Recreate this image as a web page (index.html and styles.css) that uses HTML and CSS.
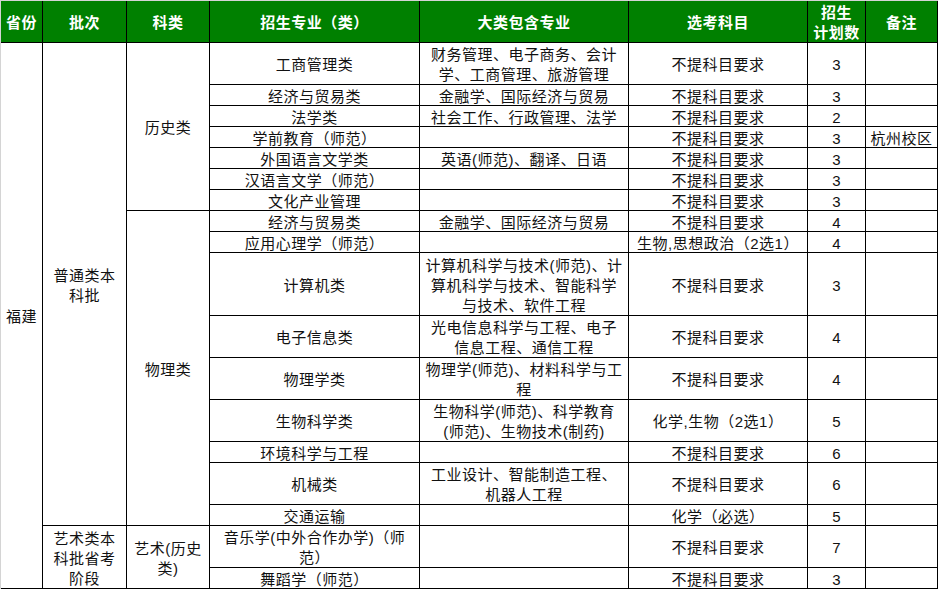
FILE: index.html
```html
<!DOCTYPE html>
<html lang="zh-CN">
<head>
<meta charset="utf-8">
<title>福建招生计划</title>
<link rel="stylesheet" href="styles.css">
</head>
<body>
<div class="sheet">
  <div class="c hd">省份</div>
  <div class="c hd">批次</div>
  <div class="c hd">科类</div>
  <div class="c hd">招生专业（类）</div>
  <div class="c hd">大类包含专业</div>
  <div class="c hd">选考科目</div>
  <div class="c hd">招生<br>计划数</div>
  <div class="c hd">备注</div>

  <div class="c s18">福建</div>
  <div class="c s16">普通类本<br>科批</div>
  <div class="c s7">历史类</div>
  <div class="c">工商管理类</div>
  <div class="c">财务管理、电子商务、会计<br>学、工商管理、旅游管理</div>
  <div class="c">不提科目要求</div>
  <div class="c n">3</div>
  <div class="c"></div>

  <div class="c">经济与贸易类</div>
  <div class="c">金融学、国际经济与贸易</div>
  <div class="c">不提科目要求</div>
  <div class="c n">3</div>
  <div class="c"></div>

  <div class="c">法学类</div>
  <div class="c">社会工作、行政管理、法学</div>
  <div class="c">不提科目要求</div>
  <div class="c n">2</div>
  <div class="c"></div>

  <div class="c">学前教育（师范）</div>
  <div class="c"></div>
  <div class="c">不提科目要求</div>
  <div class="c n">3</div>
  <div class="c">杭州校区</div>

  <div class="c">外国语言文学类</div>
  <div class="c">英语(师范)、翻译、日语</div>
  <div class="c">不提科目要求</div>
  <div class="c n">3</div>
  <div class="c"></div>

  <div class="c">汉语言文学（师范）</div>
  <div class="c"></div>
  <div class="c">不提科目要求</div>
  <div class="c n">3</div>
  <div class="c"></div>

  <div class="c">文化产业管理</div>
  <div class="c"></div>
  <div class="c">不提科目要求</div>
  <div class="c n">3</div>
  <div class="c"></div>

  <div class="c s9">物理类</div>
  <div class="c">经济与贸易类</div>
  <div class="c">金融学、国际经济与贸易</div>
  <div class="c">不提科目要求</div>
  <div class="c n">4</div>
  <div class="c"></div>

  <div class="c">应用心理学（师范）</div>
  <div class="c"></div>
  <div class="c">生物,思想政治（2选1）</div>
  <div class="c n">4</div>
  <div class="c"></div>

  <div class="c">计算机类</div>
  <div class="c">计算机科学与技术(师范)、计<br>算机科学与技术、智能科学<br>与技术、软件工程</div>
  <div class="c">不提科目要求</div>
  <div class="c n">3</div>
  <div class="c"></div>

  <div class="c">电子信息类</div>
  <div class="c">光电信息科学与工程、电子<br>信息工程、通信工程</div>
  <div class="c">不提科目要求</div>
  <div class="c n">4</div>
  <div class="c"></div>

  <div class="c">物理学类</div>
  <div class="c">物理学(师范)、材料科学与工<br>程</div>
  <div class="c">不提科目要求</div>
  <div class="c n">4</div>
  <div class="c"></div>

  <div class="c">生物科学类</div>
  <div class="c">生物科学(师范)、科学教育<br>(师范)、生物技术(制药)</div>
  <div class="c">化学,生物（2选1）</div>
  <div class="c n">5</div>
  <div class="c"></div>

  <div class="c">环境科学与工程</div>
  <div class="c"></div>
  <div class="c">不提科目要求</div>
  <div class="c n">6</div>
  <div class="c"></div>

  <div class="c">机械类</div>
  <div class="c">工业设计、智能制造工程、<br>机器人工程</div>
  <div class="c">不提科目要求</div>
  <div class="c n">6</div>
  <div class="c"></div>

  <div class="c">交通运输</div>
  <div class="c"></div>
  <div class="c">化学（必选）</div>
  <div class="c n">5</div>
  <div class="c"></div>

  <div class="c s2">艺术类本<br>科批省考<br>阶段</div>
  <div class="c s2">艺术(历史<br>类)</div>
  <div class="c">音乐学(中外合作办学)（师<br>范）</div>
  <div class="c"></div>
  <div class="c">不提科目要求</div>
  <div class="c n">7</div>
  <div class="c"></div>

  <div class="c">舞蹈学（师范）</div>
  <div class="c"></div>
  <div class="c">不提科目要求</div>
  <div class="c n">3</div>
  <div class="c"></div>
</div>
</body>
</html>
```
FILE: styles.css
```css
* {
  box-sizing: border-box;
}

html, body {
  margin: 0;
  padding: 0;
  background: #ffffff;
}

body {
  font-family: "Liberation Sans", "Noto Sans CJK SC", sans-serif;
  font-size: 15px;
  color: #111111;
}

.sheet {
  display: grid;
  width: 938px;
  grid-template-columns: 42px 84px 83px 210px 209px 179px 58px 72px;
  grid-template-rows: 42px 42px 21px 21px 21px 21px 21px 21px 21px 21px 63px 42px 42px 42px 21px 42px 21px 42px 21px;
  border-top: 1px solid #d4d4d4;
  border-left: 1px solid #d4d4d4;
}

.c {
  display: flex;
  align-items: center;
  justify-content: center;
  text-align: center;
  line-height: 20px;
  letter-spacing: 0.5px;
  white-space: nowrap;
  padding-top: 3px;
  border-right: 1px solid #000000;
  border-bottom: 1px solid #000000;
}

.hd {
  background: #008000;
  color: #ffffff;
  font-weight: bold;
}

.n {
  letter-spacing: 0;
}

.s2 { grid-row: span 2; }
.s7 { grid-row: span 7; }
.s9 { grid-row: span 9; }
.s16 { grid-row: span 16; }
.s18 { grid-row: span 18; }
```
